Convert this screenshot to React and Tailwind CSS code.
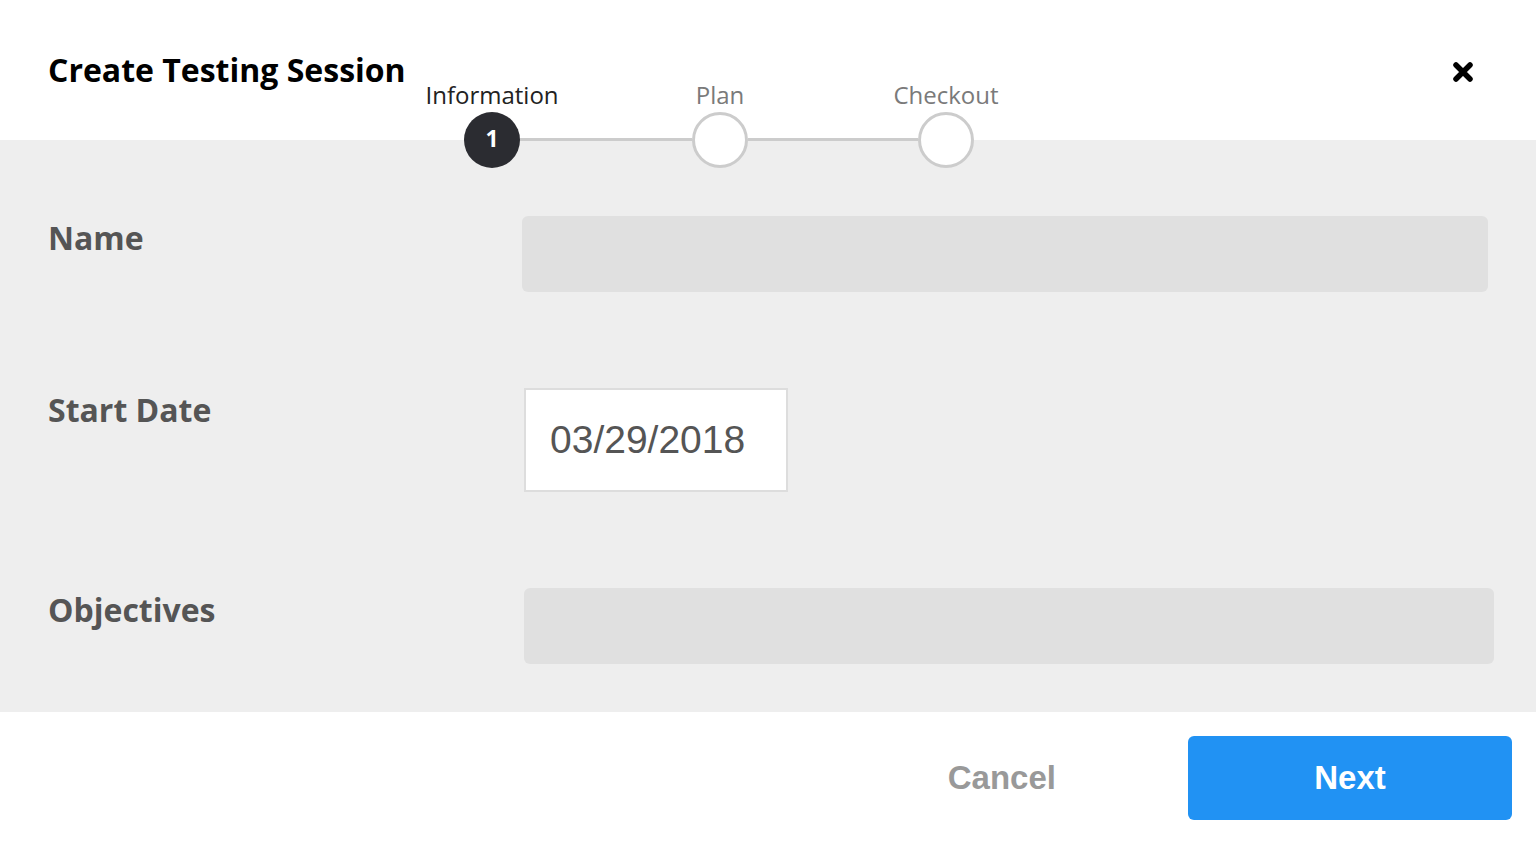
import React from "react";

const open = { fontFamily: '"Open Sans", "Liberation Sans", sans-serif' };
const arial = { fontFamily: '"Liberation Sans", Arial, sans-serif' };

function Step({ label, active, num }) {
  return (
    <div className="flex flex-col items-center w-[56px]">
      <div
        className={`whitespace-nowrap text-[24px] leading-[30px] mb-[2px] ${active ? "text-[#222222]" : "text-[#7a7a7a]"}`}
        style={open}
      >
        {label}
      </div>
      {active ? (
        <div className="w-[56px] h-[56px] rounded-full bg-[#2b2c31] flex items-center justify-center pb-[3px] text-white text-[23px] font-bold" style={open}>
          {num}
        </div>
      ) : (
        <div className="w-[56px] h-[56px] rounded-full bg-white border-[3px] border-[#cccccc]" />
      )}
    </div>
  );
}

export default function App() {
  return (
    <div className="w-[1536px] h-[844px] bg-white flex flex-col relative overflow-hidden">
      {/* Header */}
      <div className="h-[140px] flex items-start justify-between pl-[48px] pr-[61px] pt-[48px]">
        <h1 className="text-[32px] leading-[44px] font-bold text-black" style={open}>
          Create Testing Session
        </h1>
        <button className="mt-[12px] w-[24px] h-[24px] flex items-center justify-center">
          <svg width="22" height="22" viewBox="0 0 22 22">
            <path d="M4 4 L18 18 M18 4 L4 18" stroke="#000" strokeWidth="5.5" strokeLinecap="round" />
          </svg>
        </button>
      </div>

      {/* Stepper (overlaps header/body boundary) */}
      <div className="absolute left-[464px] top-[80px] flex items-end">
        <Step label="Information" active num="1" />
        <div className="w-[172px] h-[3px] bg-[#cccccc] mb-[27px]" />
        <Step label="Plan" />
        <div className="w-[170px] h-[3px] bg-[#cccccc] mb-[27px]" />
        <Step label="Checkout" />
      </div>

      {/* Body */}
      <div className="h-[572px] bg-[#eeeeee] pt-[76px] pl-[48px] flex flex-col">
        <div className="flex items-start h-[76px]">
          <div className="w-[474px] pt-[3px] text-[32px] leading-[38px] font-bold text-[#555555]" style={open}>Name</div>
          <div className="w-[966px] h-[76px] rounded-[6px] bg-[#e0e0e0]" />
        </div>
        <div className="flex items-start mt-[96px] h-[104px]">
          <div className="w-[476px] pt-[3px] text-[32px] leading-[38px] font-bold text-[#555555]" style={open}>Start Date</div>
          <div className="w-[264px] h-[104px] bg-white border-2 border-[#dddddd] flex items-center pl-[24px] text-[39px] text-[#555555]" style={arial}>
            03/29/2018
          </div>
        </div>
        <div className="flex items-start mt-[96px] h-[76px]">
          <div className="w-[476px] pt-[3px] text-[32px] leading-[38px] font-bold text-[#555555]" style={open}>Objectives</div>
          <div className="w-[970px] h-[76px] rounded-[6px] bg-[#e0e0e0]" />
        </div>
      </div>

      {/* Footer */}
      <div className="flex-1 flex items-start justify-end pt-[24px] pr-[24px]">
        <button className="h-[84px] mr-[132px] text-[33px] font-bold text-[#999999]" style={arial}>
          Cancel
        </button>
        <button className="w-[324px] h-[84px] rounded-[6px] bg-[#2192f3] text-white text-[33px] font-bold" style={arial}>
          Next
        </button>
      </div>
    </div>
  );
}
